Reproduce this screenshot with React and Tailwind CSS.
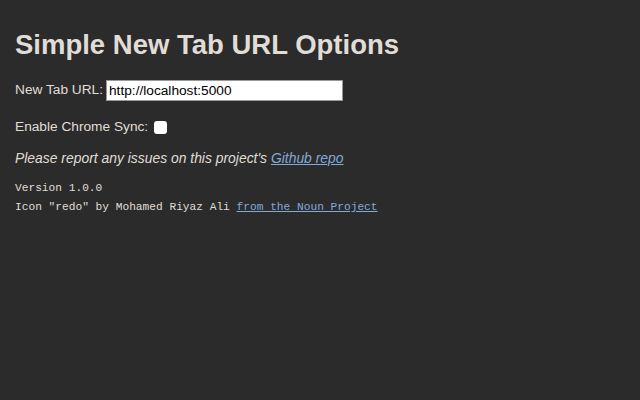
export default function App() {
  return (
    <div className="min-h-screen bg-[#2b2b2b] px-[15px] pt-[28px] font-['Liberation_Sans',Arial,sans-serif] text-[#e0ddd7]">
      <h1 className="text-[27.5px] font-bold leading-[34px]">Simple New Tab URL Options</h1>

      <div className="mt-[18px] flex items-center gap-[3px] text-[13.7px]">
        <label htmlFor="url">New Tab URL:</label>
        <input
          id="url"
          defaultValue="http://localhost:5000"
          className="h-[21px] w-[237px] border border-[#999] bg-white px-[2px] text-[13.7px] text-black outline-none"
        />
      </div>

      <div className="mt-[16px] flex items-center gap-[6px] text-[13.7px]">
        <label htmlFor="sync">Enable Chrome Sync:</label>
        <span className="h-[13px] w-[13px] rounded-[3px] bg-white" />
      </div>

      <p className="mt-[10px] text-[13.9px] italic">
        Please report any issues on this project's{' '}
        <a href="#" className="text-[#83a9d8] underline">Github repo</a>
      </p>

      <div className="mt-[11px] font-['Liberation_Mono','Courier_New',monospace] text-[11.2px] leading-[19px]">
        <div>Version 1.0.0</div>
        <div>
          Icon "redo" by Mohamed Riyaz Ali{' '}
          <a href="#" className="text-[#83a9d8] underline">from the Noun Project</a>
        </div>
      </div>
    </div>
  );
}
